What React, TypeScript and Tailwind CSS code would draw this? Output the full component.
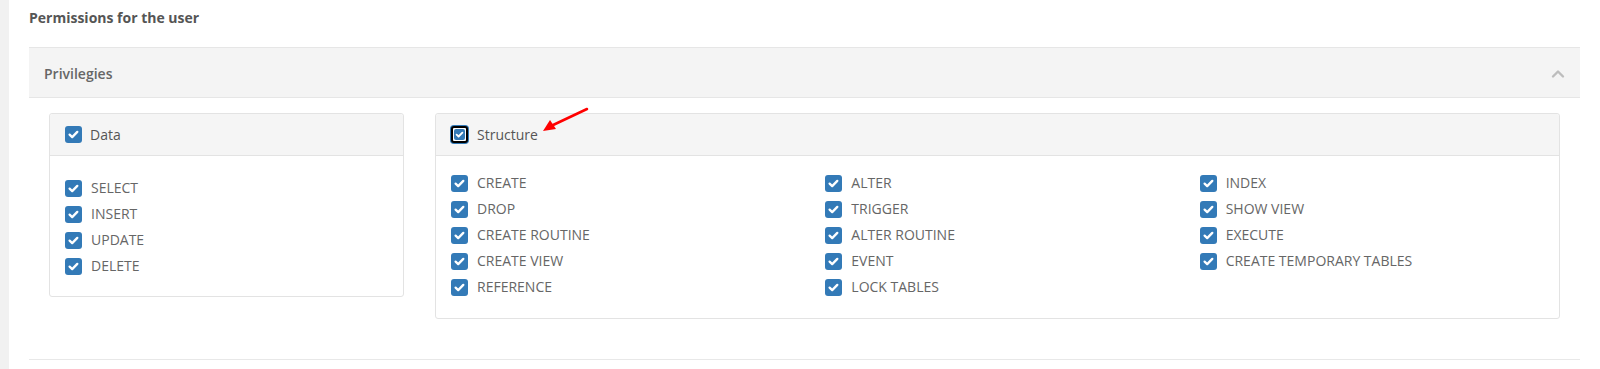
import React from 'react';

const dataPrivs = ['SELECT', 'INSERT', 'UPDATE', 'DELETE'];

const structureCols = [
  ['CREATE', 'DROP', 'CREATE ROUTINE', 'CREATE VIEW', 'REFERENCE'],
  ['ALTER', 'TRIGGER', 'ALTER ROUTINE', 'EVENT', 'LOCK TABLES'],
  ['INDEX', 'SHOW VIEW', 'EXECUTE', 'CREATE TEMPORARY TABLES'],
];

const Check = () => (
  <svg viewBox="0 0 17 17" className="w-[17px] h-[17px] shrink-0">
    <rect x="0" y="0" width="17" height="17" rx="3" fill="#337ab7" />
    <path d="M4.6 8.6 L7.2 11.1 L12.3 5.9" fill="none" stroke="#fff" strokeWidth="2.3" strokeLinecap="round" strokeLinejoin="round" />
  </svg>
);

// focused checkbox (dark ring around it)
const FocusCheck = () => (
  <span className="w-[17px] h-[17px] shrink-0 rounded-[3px] border-2 border-black bg-white p-[1px] ring-1 ring-[#337ab7] flex">
    <svg viewBox="0 0 11 11" className="w-full h-full">
      <rect x="0" y="0" width="11" height="11" rx="2" fill="#337ab7" />
      <path d="M2.6 5.6 L4.6 7.5 L8.4 3.6" fill="none" stroke="#fff" strokeWidth="1.8" strokeLinecap="round" strokeLinejoin="round" />
    </svg>
  </span>
);

const Item = ({ label }: { label: string }) => (
  <div className="flex items-center gap-[9px] h-[26px]">
    <Check />
    <span className="text-[14px] leading-[20px] text-[#666]">{label}</span>
  </div>
);

export default function App() {
  return (
    <div className="relative flex w-[1600px] h-[369px] bg-white" style={{ fontFamily: '"Open Sans", "Liberation Sans", sans-serif' }}>
      <div className="w-[9px] h-full bg-[#f1f1f1]" />
      <div className="pl-[20px]">
        <div className="pt-[8px] h-[47px] text-[14px] leading-[20px] font-bold text-[#555]">Permissions for the user</div>

        <div className="w-[1551px] border-b border-[#e8e8e8]">
          <div className="h-[51px] bg-[#f4f4f4] border-t border-b border-[#e6e6e6] flex items-center justify-between pl-[15px] pr-[15px] pt-[2px]">
            <span className="text-[14px] leading-[20px] font-semibold text-[#666]">Privilegies</span>
            <svg viewBox="0 0 14 10" className="w-[14px] h-[10px]">
              <path d="M2 7.5 L7 2.5 L12 7.5" fill="none" stroke="#bdbdbd" strokeWidth="2.4" strokeLinecap="round" strokeLinejoin="round" />
            </svg>
          </div>

          <div className="flex gap-[31px] pl-[20px] pt-[15px] pb-[40px] items-start">
            {/* Data */}
            <div className="w-[355px] border border-[#e3e3e3] rounded-[3px]">
              <div className="h-[42px] bg-[#f5f5f5] border-b border-[#e3e3e3] rounded-t-[3px] flex items-center gap-[8px] px-[15px]">
                <Check />
                <span className="text-[14px] leading-[20px] text-[#555]">Data</span>
              </div>
              <div className="px-[15px] pt-[19px] pb-[17px]">
                {dataPrivs.map((p) => (
                  <Item key={p} label={p} />
                ))}
              </div>
            </div>

            {/* Structure */}
            <div className="w-[1125px] border border-[#e3e3e3] rounded-[3px]">
              <div className="h-[42px] bg-[#f5f5f5] border-b border-[#e3e3e3] rounded-t-[3px] flex items-center gap-[9px] px-[15px]">
                <FocusCheck />
                <span className="text-[14px] leading-[20px] text-[#555]">Structure</span>
              </div>
              <div className="grid grid-cols-3 pt-[14px] pb-[18px]">
                {structureCols.map((col, i) => (
                  <div key={i} className="px-[15px]">
                    {col.map((p) => (
                      <Item key={p} label={p} />
                    ))}
                  </div>
                ))}
              </div>
            </div>
          </div>
        </div>
      </div>

      {/* annotation arrow */}
      <svg className="absolute left-[530px] top-[100px] w-[70px] h-[40px]" viewBox="0 0 70 40">
        <line x1="57" y1="9" x2="21" y2="26" stroke="#f00" strokeWidth="2.5" strokeLinecap="round" />
        <polygon points="13,31 20,20 26,29" fill="#f00" />
      </svg>
    </div>
  );
}
